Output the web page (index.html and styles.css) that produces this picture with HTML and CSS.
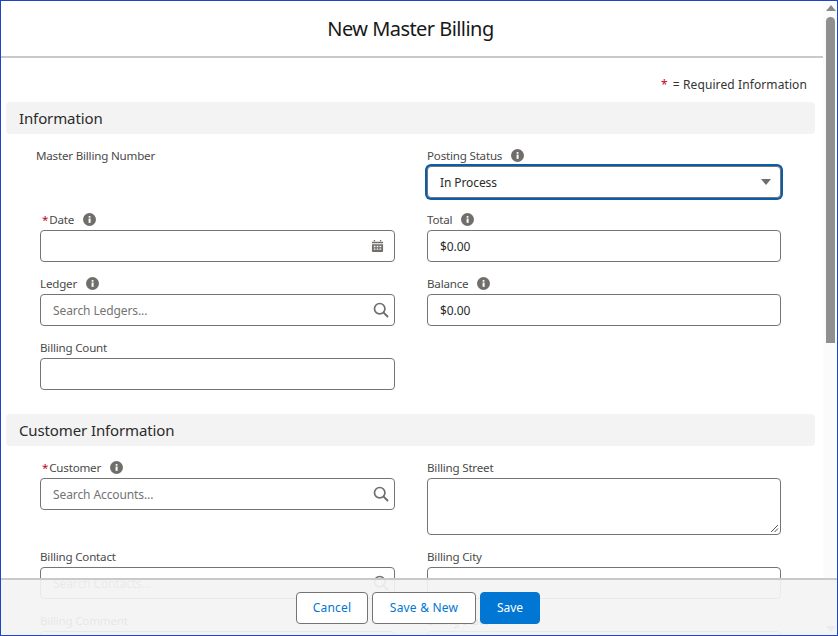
FILE: index.html
```html
<!DOCTYPE html>
<html>
<head>
<title>New Master Billing</title>
<link rel="stylesheet" href="styles.css">
</head>
<body>

<svg class="defs" width="0" height="0">
<symbol id="i_info" viewBox="0 0 14 14"><circle cx="7" cy="7" r="7" fill="#706e6b"/><rect x="6" y="6" width="2.2" height="4.6" fill="#fff"/><rect x="6" y="3.2" width="2.2" height="1.9" rx="0.9" fill="#fff"/></symbol>
<symbol id="i_search" viewBox="0 0 16 16"><circle cx="6.7" cy="6.7" r="5.2" fill="none" stroke="#706e6b" stroke-width="1.7"/><path d="M10.4 10.4L15 15" stroke="#706e6b" stroke-width="2" fill="none"/></symbol>
<symbol id="i_cal" viewBox="0 0 14 14"><path d="M3 0.5h1.4v1.5H3zM9.6 0.5H11v1.5H9.6zM1 2.4h12v1.6H1z" fill="#706e6b"/><path fill-rule="evenodd" d="M1 5h12v7.4a1 1 0 0 1-1 1H2a1 1 0 0 1-1-1zM3 6.8v1.5h1.8V6.8zM6.1 6.8v1.5h1.8V6.8zM9.2 6.8v1.5H11V6.8zM3 9.6v1.5h1.8V9.6zM6.1 9.6v1.5h1.8V9.6zM9.2 9.6v1.5H11V9.6z" fill="#706e6b"/></symbol>
</svg>

<div class="m_frame">

<div class="m_main">
<div class="m_hdr">New Master Billing</div>
<div class="m_req"><span class="star">*</span> = Required Information</div>

<div class="sec_hdr">Information</div>
<div class="f_grid f_grid_first">
<div class="fld"><div class="lbl lbl_out">Master Billing Number</div></div>
<div class="fld">
<div class="lbl">Posting Status <svg class="info"><use href="#i_info"/></svg></div>
<div class="inp inp_focus"><span class="val">In Process</span><span class="caret"></span></div>
</div>
<div class="fld">
<div class="lbl"><span class="star">*</span>Date <svg class="info"><use href="#i_info"/></svg></div>
<div class="inp"><svg class="ic_cal"><use href="#i_cal"/></svg></div>
</div>
<div class="fld">
<div class="lbl">Total <svg class="info"><use href="#i_info"/></svg></div>
<div class="inp"><span class="val">$0.00</span></div>
</div>
<div class="fld">
<div class="lbl">Ledger <svg class="info"><use href="#i_info"/></svg></div>
<div class="inp"><span class="ph">Search Ledgers...</span><svg class="ic_search"><use href="#i_search"/></svg></div>
</div>
<div class="fld">
<div class="lbl">Balance <svg class="info"><use href="#i_info"/></svg></div>
<div class="inp"><span class="val">$0.00</span></div>
</div>
<div class="fld">
<div class="lbl">Billing Count</div>
<div class="inp"></div>
</div>
</div>

<div class="sec_hdr">Customer Information</div>
<div class="f_grid">
<div class="fld">
<div class="lbl"><span class="star">*</span>Customer <svg class="info"><use href="#i_info"/></svg></div>
<div class="inp"><span class="ph">Search Accounts...</span><svg class="ic_search"><use href="#i_search"/></svg></div>
</div>
<div class="fld">
<div class="lbl">Billing Street</div>
<div class="inp inp_area"><svg class="grip" viewBox="0 0 9 9"><path d="M1 8L8 1M4.5 8L8 4.5" stroke="#555" stroke-width="1" fill="none"/></svg></div>
</div>
<div class="fld">
<div class="lbl">Billing Contact</div>
<div class="inp"><span class="ph">Search Contacts...</span><svg class="ic_search"><use href="#i_search"/></svg></div>
</div>
<div class="fld">
<div class="lbl">Billing City</div>
<div class="inp"></div>
</div>
<div class="fld">
<div class="lbl">Billing Comment</div>
<div class="inp"></div>
</div>
<div class="fld">
<div class="lbl">Billing State</div>
<div class="inp"></div>
</div>
</div>
</div>

<div class="m_scroll">
<div class="arr_up"></div>
<div class="thumb"></div>
<div class="arr_dn"></div>
</div>

<div class="m_ftr">
<div class="btn btn_cancel">Cancel</div>
<div class="btn btn_new">Save &amp; New</div>
<div class="btn btn_brand">Save</div>
</div>

</div>

</body>
</html>
```

FILE: styles.css
```css
html, body {margin:0;padding:0;height:100%;background:#fff;}
body {font-family:"Noto Sans", sans-serif;font-size:12px;color:#181818;overflow:hidden;}
.defs {display:block;height:0;}

.m_frame {display:flex;position:relative;width:838px;height:636px;box-sizing:border-box;border:1px solid #1c46c4;overflow:hidden;}
.m_main {width:822px;flex:none;}

.m_hdr {height:55px;line-height:56px;padding-right:3px;text-align:center;font-size:20px;letter-spacing:-0.55px;border-bottom:2px solid #c9c9c9;}
.m_req {height:44px;line-height:53px;text-align:right;padding-right:16px;color:#333;letter-spacing:0.1px;}
.m_req .star {margin-right:2px;}
.star {color:#ba0517;}

.sec_hdr {margin-left:5px;width:809px;height:32px;line-height:32px;padding-left:13px;box-sizing:border-box;background:#f3f3f3;border-radius:4px;font-size:15px;letter-spacing:-0.12px;color:#2b2b2b;}

.f_grid {display:grid;grid-template-columns:355px 354px;column-gap:32px;row-gap:11px;padding:11px 0 24px 39px;}

.lbl {height:21px;line-height:22px;font-size:11.6px;color:#4a4a4a;letter-spacing:-0.2px;white-space:nowrap;}
.lbl .star {margin:0 1px 0 2px;}
.lbl_out {margin-left:-4px;}
.info {width:13px;height:13px;vertical-align:-2px;margin-left:6px;}

.inp {display:flex;align-items:center;height:32px;box-sizing:border-box;padding:0 5px 0 12px;background:#fff;border:1px solid #747474;border-radius:4px;}
.inp_area {height:57px;align-items:flex-end;justify-content:flex-end;padding:0 1px 1px 0;}
.inp_focus {border:1px solid #747474;box-shadow:0 0 0 2px #0b5cab;}
.val {flex:1;letter-spacing:-0.1px;color:#2b2b2b;}
.ph {flex:1;color:#747474;letter-spacing:-0.1px;}
.caret {width:0;height:0;margin-right:4px;border-left:5px solid transparent;border-right:5px solid transparent;border-top:6px solid #706e6b;}
.ic_search {width:16px;height:16px;margin-left:auto;}
.ic_cal {width:13px;height:14px;margin-left:auto;margin-right:5px;}
.grip {width:9px;height:9px;}

.m_scroll {flex:1;display:flex;flex-direction:column;align-items:center;background:#fbfbfb;padding:4px 0 0 1px;}
.arr_up {width:0;height:0;border-left:5px solid transparent;border-right:5px solid transparent;border-bottom:6px solid #8a8a8a;}
.thumb {width:9px;height:326px;margin-top:6px;background:#8f8f8f;border-radius:5px 5px 0 0;}
.arr_dn {width:0;height:0;margin-top:auto;margin-bottom:3px;border-left:5px solid transparent;border-right:5px solid transparent;border-top:6px solid #8a8a8a;}

.m_ftr {position:absolute;left:0;right:0;bottom:0;height:57px;box-sizing:border-box;display:flex;justify-content:center;gap:4px;padding:12px 2px 0 0;background:rgba(243,243,243,0.92);border-top:2px solid #c9c9c9;}
.btn {height:32px;line-height:30px;box-sizing:border-box;text-align:center;background:#fff;border:1px solid #747474;border-radius:4px;color:#0176d3;letter-spacing:0.2px;}
.btn_cancel {width:72px;}
.btn_new {width:104px;}
.btn_brand {width:60px;background:#0176d3;border-color:#0176d3;color:#fff;letter-spacing:0;}
```
